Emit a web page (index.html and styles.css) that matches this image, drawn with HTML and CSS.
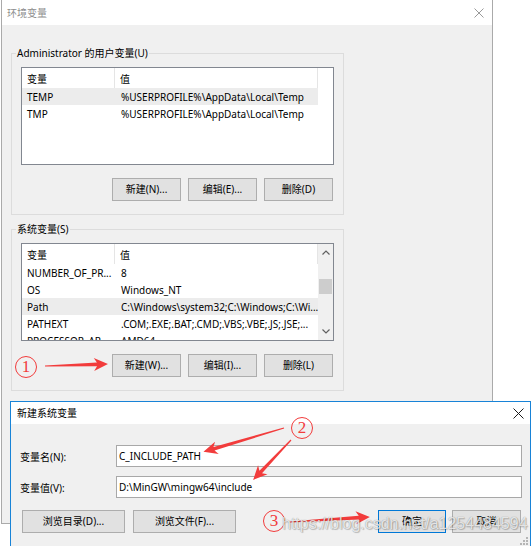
FILE: index.html
```html
<!DOCTYPE html>
<html lang="zh-CN">
<head>
<meta charset="utf-8">
<title>环境变量</title>
<link rel="stylesheet" href="styles.css">
</head>
<body>
<section class="win win-env">
  <header class="titlebar inactive">
    <span class="title">环境变量</span>
    <svg class="close" width="10" height="10" viewBox="0 0 10 10"><path d="M0.5,0.5 L9.5,9.5 M9.5,0.5 L0.5,9.5" stroke="#9a9a9a" stroke-width="1" fill="none"/></svg>
  </header>
  <div class="win-body">
    <div class="group">
      <div class="group-title">Administrator 的用户变量(U)</div>
      <div class="listbox">
        <div class="lv-main">
          <div class="lv-head"><span class="c1">变量</span><span class="c2">值</span></div>
          <div class="lv-row sel"><span class="c1">TEMP</span><span class="c2">%USERPROFILE%\AppData\Local\Temp</span></div>
          <div class="lv-row"><span class="c1">TMP</span><span class="c2">%USERPROFILE%\AppData\Local\Temp</span></div>
        </div>
      </div>
      <div class="btn-row">
        <button class="btn">新建(N)...</button>
        <button class="btn">编辑(E)...</button>
        <button class="btn">删除(D)</button>
      </div>
    </div>
    <div class="group group-sys">
      <div class="group-title">系统变量(S)</div>
      <div class="listbox">
        <div class="lv-main">
          <div class="lv-head"><span class="c1">变量</span><span class="c2">值</span></div>
          <div class="lv-row"><span class="c1">NUMBER_OF_PR...</span><span class="c2">8</span></div>
          <div class="lv-row"><span class="c1">OS</span><span class="c2">Windows_NT</span></div>
          <div class="lv-row sel"><span class="c1">Path</span><span class="c2">C:\Windows\system32;C:\Windows;C:\Wi...</span></div>
          <div class="lv-row"><span class="c1">PATHEXT</span><span class="c2">.COM;.EXE;.BAT;.CMD;.VBS;.VBE;.JS;.JSE;...</span></div>
          <div class="lv-row"><span class="c1">PROCESSOR_AR...</span><span class="c2">AMD64</span></div>
        </div>
        <div class="vscroll">
          <div class="sb-arrow"><svg width="8" height="5" viewBox="0 0 8 5"><path d="M0.5,4.5 L4,1 L7.5,4.5" stroke="#606060" stroke-width="1.2" fill="none"/></svg></div>
          <div class="sb-track"><div class="sb-thumb"></div></div>
          <div class="sb-arrow"><svg width="8" height="5" viewBox="0 0 8 5"><path d="M0.5,0.5 L4,4 L7.5,0.5" stroke="#606060" stroke-width="1.2" fill="none"/></svg></div>
        </div>
      </div>
      <div class="btn-row">
        <button class="btn">新建(W)...</button>
        <button class="btn">编辑(I)...</button>
        <button class="btn">删除(L)</button>
      </div>
    </div>
  </div>
</section>

<section class="win win-dialog">
  <header class="titlebar dlg-titlebar">
    <span class="title">新建系统变量</span>
    <svg class="close" width="11" height="11" viewBox="0 0 11 11"><path d="M0.5,0.5 L10.5,10.5 M10.5,0.5 L0.5,10.5" stroke="#1a1a1a" stroke-width="1" fill="none"/></svg>
  </header>
  <div class="dlg-body">
    <div class="field">
      <label class="field-label">变量名(N):</label>
      <div class="textbox">C_INCLUDE_PATH</div>
    </div>
    <div class="field">
      <label class="field-label">变量值(V):</label>
      <div class="textbox">D:\MinGW\mingw64\include</div>
    </div>
    <div class="dlg-buttons">
      <button class="btn btn-wide">浏览目录(D)...</button>
      <button class="btn btn-wide">浏览文件(F)...</button>
      <span class="spacer"></span>
      <button class="btn btn-ok">确定</button>
      <button class="btn btn-cancel">取消</button>
    </div>
  </div>
  <svg class="grip" width="8" height="8" viewBox="0 0 8 8"><g fill="#b5b5b5"><rect x="6" y="0" width="2" height="2"/><rect x="3" y="3" width="2" height="2"/><rect x="6" y="3" width="2" height="2"/><rect x="0" y="6" width="2" height="2"/><rect x="3" y="6" width="2" height="2"/><rect x="6" y="6" width="2" height="2"/></g></svg>
</section>

<svg class="marks" width="532" height="546" viewBox="0 0 532 546">
  <g fill="#f23c3c">
    <polygon transform="translate(45,366) rotate(-1.8)" points="0,-0.6 52,-1.8 49,-6.5 63,0 49,6.5 52,1.8 0,0.6"/>
    <polygon transform="translate(284,428) rotate(163.5)" points="0,-0.6 73,-1.8 70,-6.5 84,0 70,6.5 73,1.8 0,0.6"/>
    <polygon transform="translate(291,440) rotate(133.5)" points="0,-0.6 44,-1.8 41,-6.5 55,0 41,6.5 44,1.8 0,0.6"/>
    <polygon transform="translate(290,522) rotate(-3.6)" points="0,-0.6 69,-1.8 66,-6.5 80,0 66,6.5 69,1.8 0,0.6"/>
  </g>
</svg>
<span class="num n1">1</span>
<span class="num n2">2</span>
<span class="num n3">3</span>

<div class="watermark">https://blog.csdn.net/a1254484594</div>
</body>
</html>
```

FILE: styles.css
```css
* { box-sizing: border-box; }
html, body { margin: 0; padding: 0; }
body {
  width: 532px;
  height: 546px;
  overflow: hidden;
  position: relative;
  background: #ffffff;
  font-family: "Noto Sans", "Noto Sans CJK SC", sans-serif;
  font-size: 10px;
  color: #000;
}

/* windows on the desktop */
.win {
  position: absolute;
  background: #f0f0f0;
}
.win-env {
  left: 1px;
  top: -1px;
  width: 492px;
  height: 525px;
  border: 1px solid #aaaaaa;
}
.titlebar {
  height: 25px;
  background: #ffffff;
  display: flex;
  align-items: center;
  justify-content: space-between;
  padding: 0 8px 0 5px;
}
.titlebar .title { line-height: 16px; }
.inactive .title { color: #8e8e8e; }

.win-body { padding: 28px 0 0 9px; }

.group {
  width: 333px;
  border: 1px solid #dcdcdc;
  padding-bottom: 13px;
}
.group-sys { margin-top: 14px; }
.group-title {
  width: fit-content;
  margin: -9px 0 0 4px;
  padding: 0 1px;
  line-height: 16px;
  background: #f0f0f0;
}

.listbox {
  margin: 6px 0 0 9px;
  width: 313px;
  height: 98px;
  border: 1px solid #828790;
  background: #fff;
  display: flex;
  overflow: hidden;
}
.lv-main { width: 296px; overflow: hidden; }
.lv-head {
  height: 20px;
  display: flex;
}
.lv-head span {
  display: flex;
  align-items: center;
  border-right: 1px solid #e5e5e5;
}
.lv-row {
  height: 17px;
  display: flex;
  align-items: center;
  white-space: nowrap;
}
.lv-row.sel { background: #ececec; }
.c1 { width: 93px; padding-left: 5px; overflow: hidden; white-space: nowrap; }
.c2 { width: 203px; padding-left: 5px; overflow: hidden; white-space: nowrap; }
.lv-row .c1 { padding-left: 5px; }
.lv-row .c2 { padding-left: 6px; }

.vscroll {
  width: 15px;
  background: #f0f0f0;
  display: flex;
  flex-direction: column;
}
.sb-arrow {
  height: 17px;
  display: flex;
  align-items: center;
  justify-content: center;
}
.sb-track { flex: 1; padding-top: 18px; }
.sb-thumb {
  width: 13px;
  height: 15px;
  margin: 0 auto;
  background: #cdcdcd;
}

.btn-row {
  display: flex;
  justify-content: flex-end;
  gap: 7px;
  margin: 13px 10px 0 0;
}
.btn {
  height: 23px;
  width: 69px;
  border: 1px solid #adadad;
  background: #e1e1e1;
  font-family: inherit;
  font-size: 10px;
  color: #000;
  padding: 0;
  line-height: 21px;
}

/* dialog */
.win-dialog {
  left: 10px;
  top: 401px;
  width: 521px;
  height: 147px;
  border: 1px solid #1883d7;
}
.dlg-titlebar {
  height: 22px;
  padding: 0 6px 0 6px;
}
.dlg-body { padding: 21px 8px 0 9px; }
.field {
  display: flex;
  align-items: center;
  margin-bottom: 9px;
}
.field-label { width: 96px; }
.textbox {
  flex: 1;
  height: 22px;
  border: 1px solid #a8a8a8;
  background: #fff;
  padding: 0 2px;
  line-height: 20px;
  white-space: nowrap;
}
.dlg-buttons {
  display: flex;
  align-items: center;
  margin-top: 12px;
  padding: 0 1px 0 2px;
}
.btn-wide { width: 103px; }
.btn-wide + .btn-wide { margin-left: 8px; }
.spacer { flex: 1; }
.btn-ok { width: 68px; border-color: #0078d7; margin-right: 6px; }
.btn-cancel { width: 69px; }
.grip { position: absolute; right: 2px; bottom: 2px; }

/* annotations */
.marks {
  position: absolute;
  left: 0;
  top: 0;
  pointer-events: none;
}
.num {
  position: absolute;
  width: 22px;
  height: 22px;
  border: 1.5px solid #f23c3c;
  border-radius: 50%;
  color: #f23c3c;
  font-family: "Liberation Serif", serif;
  font-size: 17px;
  line-height: 19px;
  text-align: center;
}
.n1 { left: 15px; top: 356px; }
.n2 { left: 291px; top: 417px; }
.n3 { left: 263px; top: 510px; }

.watermark {
  position: absolute;
  left: 282px;
  top: 514px;
  font-family: "Liberation Sans", sans-serif;
  font-size: 16px;
  line-height: 20px;
  color: rgba(255, 255, 255, 0.8);
  text-shadow: 0 0 1px rgba(0, 0, 0, 0.45), 1px 1px 1px rgba(0, 0, 0, 0.2);
  white-space: nowrap;
}
```
